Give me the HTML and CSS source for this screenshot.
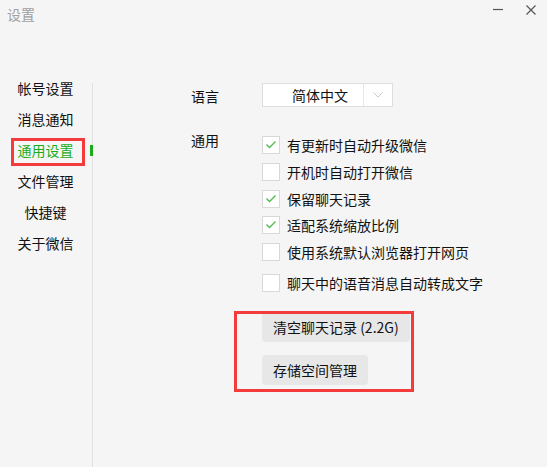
FILE: index.html
```html
<!DOCTYPE html>
<html lang="zh-CN">
<head>
<meta charset="utf-8">
<title>设置</title>
<link rel="stylesheet" href="styles.css">
</head>
<body>
<div class="window">
  <header class="titlebar">
    <div class="title">设置</div>
    <div class="controls">
      <span class="ctl"><svg width="10" height="10" viewBox="0 0 10 10"><line x1="0" y1="4.5" x2="10" y2="4.5" stroke="#555" stroke-width="1.2"/></svg></span>
      <span class="ctl"><svg width="10" height="10" viewBox="0 0 10 10"><path d="M0.5 0.5 L9.5 9.5 M9.5 0.5 L0.5 9.5" stroke="#555" stroke-width="1.2" fill="none"/></svg></span>
    </div>
  </header>
  <div class="content">
    <nav class="sidebar">
      <a class="nav-item">帐号设置</a>
      <a class="nav-item">消息通知</a>
      <a class="nav-item active">通用设置<span class="indicator"></span><span class="mark mark-nav"></span></a>
      <a class="nav-item">文件管理</a>
      <a class="nav-item">快捷键</a>
      <a class="nav-item">关于微信</a>
    </nav>
    <div class="divider"></div>
    <main class="panel">
      <div class="lang-row">
        <div class="label lang-label">语言</div>
        <div class="select">
          <span class="select-value">简体中文</span>
          <span class="select-arrow"><svg width="10" height="6" viewBox="0 0 10 6"><path d="M0.5 0.5 L5 5 L9.5 0.5" stroke="#c9c9c9" stroke-width="1" fill="none"/></svg></span>
        </div>
      </div>
      <div class="general-row">
        <div class="label">通用</div>
        <div class="options">
          <div class="option"><span class="checkbox"><svg width="16" height="16" viewBox="0 0 16 16"><path d="M3.5 7.5 L6.5 10.5 L12.5 4.5" stroke="#4cbb4a" stroke-width="1.3" fill="none"/></svg></span><span>有更新时自动升级微信</span></div>
          <div class="option"><span class="checkbox"></span><span>开机时自动打开微信</span></div>
          <div class="option"><span class="checkbox"><svg width="16" height="16" viewBox="0 0 16 16"><path d="M3.5 7.5 L6.5 10.5 L12.5 4.5" stroke="#4cbb4a" stroke-width="1.3" fill="none"/></svg></span><span>保留聊天记录</span></div>
          <div class="option"><span class="checkbox"><svg width="16" height="16" viewBox="0 0 16 16"><path d="M3.5 7.5 L6.5 10.5 L12.5 4.5" stroke="#4cbb4a" stroke-width="1.3" fill="none"/></svg></span><span>适配系统缩放比例</span></div>
          <div class="option"><span class="checkbox"></span><span>使用系统默认浏览器打开网页</span></div>
          <div class="option option-last"><span class="checkbox"></span><span>聊天中的语音消息自动转成文字</span></div>
          <div class="actions">
            <button class="btn">清空聊天记录 (2.2G)</button>
            <button class="btn">存储空间管理</button>
            <span class="mark mark-actions"></span>
          </div>
        </div>
      </div>
    </main>
  </div>
</div>
</body>
</html>
```

FILE: styles.css
```css
* { box-sizing: border-box; }
html, body {
  margin: 0;
  padding: 0;
  background: #f5f5f5;
}
body {
  font-family: "Noto Sans CJK SC", "Noto Sans", sans-serif;
  font-size: 14px;
  color: #111;
}
.window {
  width: 547px;
  height: 467px;
  display: flex;
  flex-direction: column;
  overflow: hidden;
}
.titlebar {
  height: 78px;
  display: flex;
  justify-content: space-between;
  align-items: flex-start;
  flex: none;
}
.title {
  padding: 4px 0 0 7px;
  line-height: 20px;
  color: #a0a0a0;
}
.controls {
  display: flex;
  gap: 23px;
  padding: 5px 11px 0 0;
}
.ctl { display: block; width: 10px; height: 10px; }
.ctl svg { display: block; }

.content {
  flex: 1;
  display: flex;
}
.sidebar {
  width: 92px;
  padding-right: 1px;
  display: flex;
  flex-direction: column;
  gap: 11px;
  text-align: center;
  flex: none;
}
.nav-item {
  position: relative;
  display: block;
  line-height: 20px;
  color: #111;
}
.nav-item.active { color: #1aad19; }
.indicator {
  position: absolute;
  left: 90px;
  top: 5px;
  width: 3px;
  height: 11px;
  background: #1aad19;
}
.mark {
  position: absolute;
  border: 3px solid #f43b3b;
  pointer-events: none;
}
.mark-nav {
  left: 11px;
  top: -2px;
  width: 74px;
  height: 28px;
}
.divider {
  width: 1px;
  margin-top: 5px;
  background: #e0e0e0;
  flex: none;
}
.panel {
  flex: 1;
  padding: 5px 0 0 98px;
}
.label {
  width: 71px;
  flex: none;
  line-height: 20px;
  color: #111;
}
.lang-row {
  display: flex;
}
.lang-label {
  line-height: 24px;
  padding-top: 1px;
}
.select {
  width: 131px;
  height: 24px;
  border: 1px solid #dedede;
  background: #fff;
  display: flex;
}
.select-value {
  width: 101px;
  border-right: 1px solid #e6e6e6;
  padding-left: 29px;
  line-height: 22px;
  color: #111;
}
.select-arrow {
  flex: 1;
  display: flex;
  align-items: center;
  justify-content: center;
}
.select-arrow svg { display: block; }

.general-row {
  display: flex;
  margin-top: 22px;
}
.options {
  padding-top: 6px;
  display: flex;
  flex-direction: column;
  gap: 8.75px;
}
.option {
  display: flex;
  align-items: center;
  gap: 7px;
  height: 18px;
  line-height: 18px;
  white-space: nowrap;
}
.option-last { margin-top: 4px; }
.checkbox {
  width: 18px;
  height: 18px;
  border: 1px solid #d8d8d8;
  background: #fff;
  flex: none;
  display: block;
}
.checkbox svg { display: block; }

.actions {
  position: relative;
  margin-top: 11px;
  display: flex;
  flex-direction: column;
  align-items: flex-start;
  gap: 13px;
}
.btn {
  height: 30px;
  padding: 0 11px;
  border: none;
  border-radius: 4px;
  background: #e7e7e7;
  font-family: inherit;
  font-size: 14px;
  color: #111;
  line-height: 30px;
}
.mark-actions {
  left: -28px;
  top: -1px;
  width: 180px;
  height: 81px;
}
```
